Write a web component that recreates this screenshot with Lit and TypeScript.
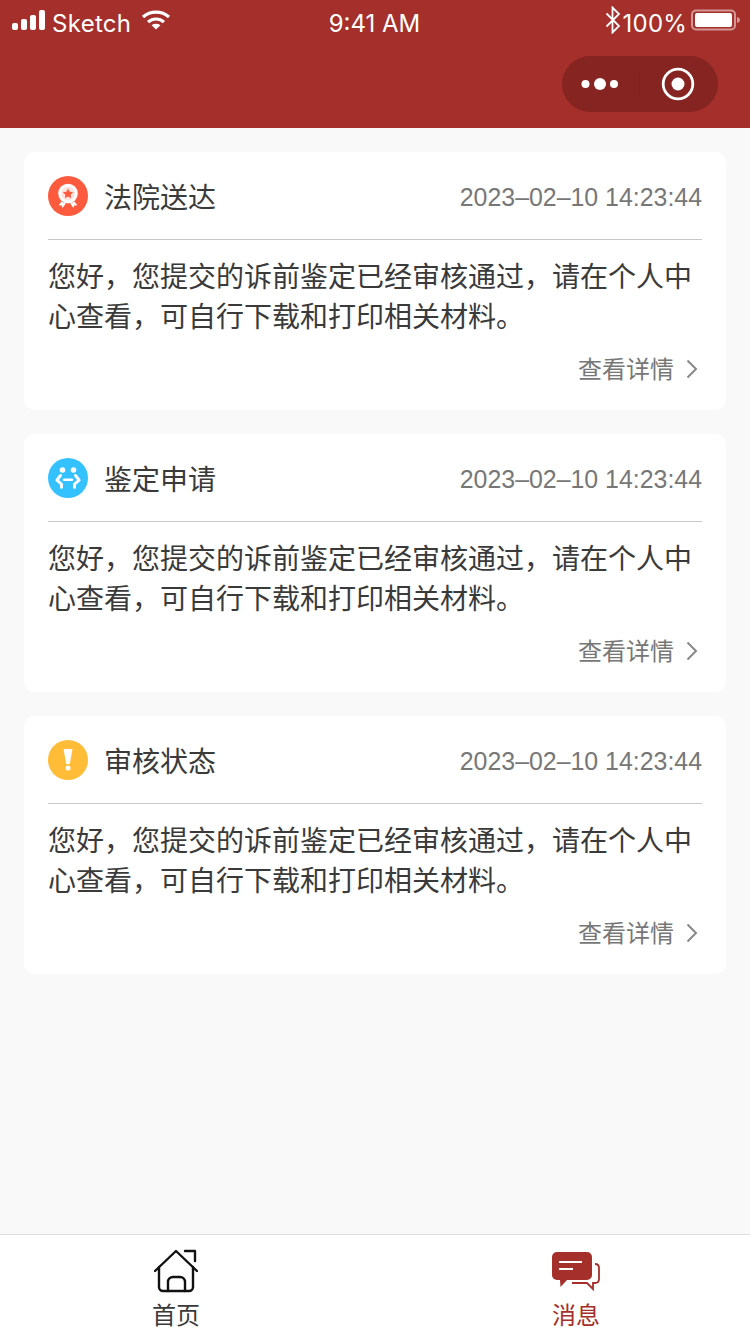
import {LitElement, css, html} from "lit";
import {customElement} from "lit/decorators.js";

const BODY = "您好\uFF0C您提交的诉前鉴定已经审核通过\uFF0C请在个人中心查看\uFF0C可自行下载和打印相关材料。";

const awardIcon = html`
  <svg viewBox="0 0 40 40" width="40" height="40">
    <circle cx="20" cy="20" r="20" fill="#fd5a3e"></circle>
    <circle cx="20" cy="17.500" r="9.800" fill="#fff"></circle>
    <circle cx="20" cy="17.500" r="6.800" fill="#ffe3dc"></circle>
    <path d="M20 12.400l1.600 3.300 3.600.5-2.600 2.500.6 3.600-3.200-1.700-3.200 1.700.6-3.600-2.600-2.500 3.600-.5z" fill="#fd5a3e"></path>
    <path d="M13.500 25.500l-2.800 3.700 3 .2.800 2.600 3.300-4.600zM26.500 25.500l2.800 3.700-3 .2-.8 2.600-3.300-4.600z" fill="#fff"></path>
  </svg>
`;

const applyIcon = html`
  <svg viewBox="0 0 40 40" width="40" height="40">
    <circle cx="20" cy="20" r="20" fill="#33c1ff"></circle>
    <circle cx="14.500" cy="12" r="2.800" fill="#fff"></circle>
    <circle cx="25.500" cy="12" r="2.800" fill="#fff"></circle>
    <path d="M12.500 17.500l-3.600 4.600 4.400 3.900M27.500 17.500l3.600 4.600-4.400 3.900" fill="none" stroke="#fff" stroke-width="3" stroke-linecap="round" stroke-linejoin="round"></path>
    <path d="M16 21.800h8" stroke="#fff" stroke-width="2.600" stroke-linecap="round"></path>
    <path d="M13.500 26.500v2.800M26.500 26.500v2.800" stroke="#fff" stroke-width="3" stroke-linecap="round"></path>
  </svg>
`;

const alertIcon = html`
  <svg viewBox="0 0 40 40" width="40" height="40">
    <circle cx="20" cy="20" r="20" fill="#ffbc36"></circle>
    <path d="M15.500 9h9l-2.700 15h-3.600z" fill="#fff"></path>
    <circle cx="20" cy="28" r="2.500" fill="#fff"></circle>
  </svg>
`;

const NOTICES = [
  {title: "法院送达", icon: awardIcon},
  {title: "鉴定申请", icon: applyIcon},
  {title: "审核状态", icon: alertIcon},
];

@customElement("app-root")
export class AppRoot extends LitElement {
  static override styles = css`
    :host {
      display: flex;
      flex-direction: column;
      width: 750px;
      height: 1334px;
      overflow: hidden;
      background: #f9f9f9;
      font-family: "Noto Sans CJK SC", "Noto Sans", sans-serif;
    }

    .top {
      height: 128px;
      flex: none;
      background: #a42f2b;
      color: #fff;
    }

    .status {
      display: grid;
      grid-template-columns: 1fr auto 1fr;
      align-items: center;
      height: 46px;
      padding: 1px 9px 0 12px;
      font-family: Inter, "Liberation Sans", sans-serif;
      font-size: 24px;
      line-height: 46px;
    }

    .status-left,
    .status-right {
      display: flex;
      align-items: center;
    }

    .status-left {
      gap: 6px;
    }

    .status svg {
      margin-bottom: 8px;
    }

    .carrier {
      margin-right: 4px;
      letter-spacing: 0.3px;
    }

    .status-right {
      justify-content: flex-end;
    }

    .clock {
      margin: 0 3px 0 -1px;
    }

    .percent {
      margin: 0 4px 0 2px;
      letter-spacing: 0.2px;
    }

    .capsule-row {
      display: flex;
      justify-content: flex-end;
      padding: 9px 32px 0 0;
    }

    .capsule {
      display: flex;
      align-items: center;
      width: 156px;
      height: 56px;
      border-radius: 28px;
      background: #852420;
    }

    .capsule-part {
      flex: 1;
      display: flex;
      align-items: center;
      justify-content: center;
    }

    .capsule-part + .capsule-part {
      border-left: 1px solid #7c2420;
      height: 32px;
      padding-right: 2px;
    }

    .list {
      flex: 1;
      display: flex;
      flex-direction: column;
      gap: 24px;
      padding: 24px 24px 0;
    }

    .card {
      background: #fff;
      border-radius: 10px;
      padding: 0 24px;
      height: 258px;
      box-sizing: border-box;
    }

    .card-head {
      display: flex;
      align-items: center;
      height: 88px;
      box-sizing: border-box;
      border-bottom: 1px solid #c8c8c8;
    }

    .card-icon {
      display: flex;
      width: 40px;
      height: 40px;
      margin-right: 16px;
    }

    .card-title {
      flex: 1;
      font-size: 28px;
      color: #3a3a3a;
    }

    .card-time {
      padding-top: 4px;
      font-family: "Liberation Sans", Arial, sans-serif;
      font-size: 24.900px;
      color: #777;
    }

    .card-body {
      margin: 15px 0 0;
      font-size: 28px;
      line-height: 40px;
      color: #3a3a3a;
    }

    .card-more {
      display: flex;
      align-items: center;
      justify-content: flex-end;
      gap: 12px;
      margin-top: 13px;
      padding-right: 4px;
      font-size: 24px;
      line-height: 40px;
      color: #777;
    }

    .card-more svg {
      margin-top: 2px;
    }

    .tabbar {
      flex: none;
      display: flex;
      gap: 96px;
      height: 100px;
      padding: 0 22px 0 24px;
      box-sizing: border-box;
      border-top: 1px solid #dedede;
      background: #fff;
    }

    .tab {
      flex: 1;
      display: flex;
      flex-direction: column;
      align-items: center;
      padding-top: 14px;
      font-size: 24px;
      line-height: 34px;
      color: #3a3a3a;
    }

    .tab svg {
      display: block;
      margin-bottom: 4px;
    }

    .tab.active {
      color: #a42f2b;
    }
  `;

  private renderStatus() {
    return html`
      <div class="status">
        <div class="status-left">
          <svg width="34" height="22" viewBox="0 0 34 22">
            <rect x="0" y="14" width="6" height="7" rx="2" fill="#fff"></rect>
            <rect x="9" y="10" width="6" height="11" rx="2" fill="#fff"></rect>
            <rect x="18" y="6" width="6" height="15" rx="2" fill="#fff"></rect>
            <rect x="27" y="1" width="6" height="20" rx="2" fill="#fff"></rect>
          </svg>
          <span class="carrier">Sketch</span>
          <svg width="30" height="22" viewBox="0 0 30 22" fill="none" stroke="#fff" stroke-width="3.200">
            <path d="M2 8C9.500 1.500 20.500 1.500 28 8"></path>
            <path d="M7 13c4.700-4 11.300-4 16 0"></path>
            <path d="M15 20.500l-4.500-4.300c2.700-1.800 6.300-1.800 9 0z" fill="#fff" stroke="none"></path>
          </svg>
        </div>
        <div class="clock">9:41 AM</div>
        <div class="status-right">
          <svg width="16" height="28" viewBox="0 0 16 28" fill="none" stroke="#fff" stroke-width="1.800">
            <path d="M1.500 7.500L14 20l-6.500 6.500V1.500L14 8 1.500 20.500"></path>
          </svg>
          <span class="percent">100%</span>
          <svg width="50" height="22" viewBox="0 0 50 22">
            <rect x="1" y="1.500" width="43" height="19" rx="4" fill="none" stroke="#fff" stroke-opacity="0.5" stroke-width="2"></rect>
            <rect x="4" y="4" width="37" height="14" rx="2" fill="#fff"></rect>
            <path d="M46 8c1.700.4 3 1.500 3 3s-1.300 2.600-3 3z" fill="#fff" fill-opacity="0.5"></path>
          </svg>
        </div>
      </div>
    `;
  }

  private renderCapsule() {
    return html`
      <div class="capsule-row">
        <div class="capsule">
          <div class="capsule-part">
            <svg width="38" height="14" viewBox="0 0 38 14" fill="#fff">
              <circle cx="4.500" cy="7" r="4"></circle>
              <circle cx="19" cy="7" r="6"></circle>
              <circle cx="33" cy="7" r="4"></circle>
            </svg>
          </div>
          <div class="capsule-part">
            <svg width="34" height="34" viewBox="0 0 34 34">
              <circle cx="17" cy="17" r="14.800" fill="none" stroke="#fff" stroke-width="2.800"></circle>
              <circle cx="17" cy="17" r="6.500" fill="#fff"></circle>
            </svg>
          </div>
        </div>
      </div>
    `;
  }

  override render() {
    return html`
      <div class="top">${this.renderStatus()}${this.renderCapsule()}</div>
      <div class="list">
        ${NOTICES.map(
          (n) => html`
            <div class="card">
              <div class="card-head">
                <span class="card-icon">${n.icon}</span>
                <span class="card-title">${n.title}</span>
                <span class="card-time">2023–02–10 14:23:44</span>
              </div>
              <p class="card-body">${BODY}</p>
              <div class="card-more">
                <span>查看详情</span>
                <svg width="12" height="20" viewBox="0 0 12 20" fill="none" stroke="#888" stroke-width="2">
                  <path d="M1.500 1.500L10 10l-8.500 8.500"></path>
                </svg>
              </div>
            </div>
          `
        )}
      </div>
      <div class="tabbar">
        <div class="tab">
          <svg width="44" height="44" viewBox="0 0 44 44" fill="none" stroke="#111" stroke-width="2.400" stroke-linecap="round" stroke-linejoin="round">
            <path d="M1 22L22 2l21 20"></path>
            <path d="M31 2h10v10"></path>
            <path d="M5 18v20a4 4 0 0 0 4 4h26a4 4 0 0 0 4-4V18"></path>
            <path d="M14 42V33a5 5 0 0 1 5-5h7a5 5 0 0 1 5 5v9"></path>
          </svg>
          <span>首页</span>
        </div>
        <div class="tab active">
          <svg width="50" height="44" viewBox="0 0 50 44">
            <path d="M6 3h30a5 5 0 0 1 5 5v18a5 5 0 0 1-5 5H16l-6.500 7-.5-7H6a5 5 0 0 1-5-5V8a5 5 0 0 1 5-5z" fill="#a42f2b"></path>
            <path d="M8 13h23M8 20h14" stroke="#fff" stroke-width="2.200"></path>
            <path d="M44 15c2.500 0 4 1.500 4 4v11c0 2.500-1.500 4-4 4h-2v6l-6-6H21" fill="none" stroke="#a42f2b" stroke-width="1.800"></path>
          </svg>
          <span>消息</span>
        </div>
      </div>
    `;
  }
}
